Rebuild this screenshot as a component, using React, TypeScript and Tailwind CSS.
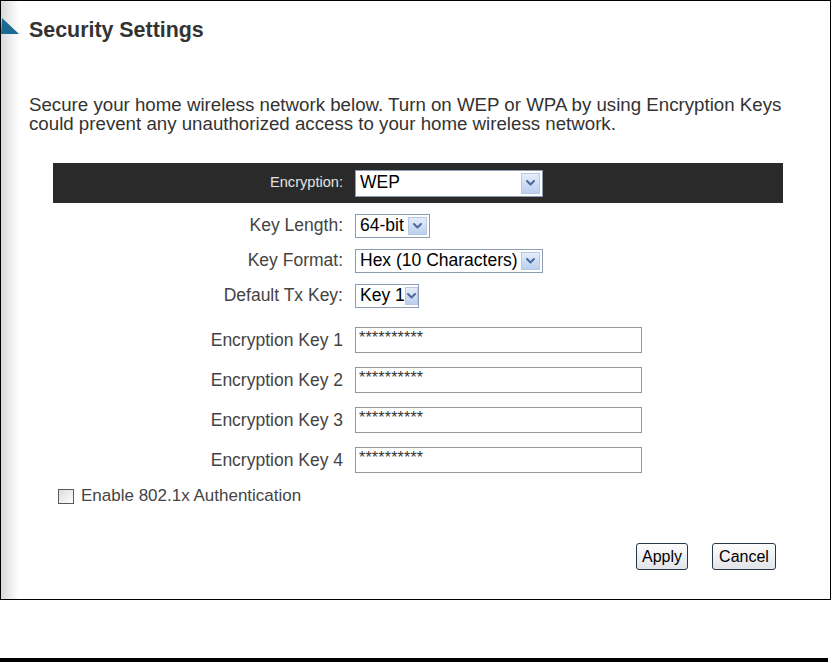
import React from "react";

const font = { fontFamily: '"Liberation Sans", Arial, sans-serif' };

function Arrow() {
  return (
    <div className="w-[19px] self-stretch my-[2px] mr-[2px] flex items-center justify-center border border-[#b7c8e6] bg-linear-to-b from-[#e4edfb] to-[#bccfee]">
      <svg width="11" height="8" viewBox="0 0 11 8" fill="none" stroke="#4c6a9e" strokeWidth="2" strokeLinecap="round" strokeLinejoin="round">
        <path d="M2 2l3.5 3.5L9 2" />
      </svg>
    </div>
  );
}

function Select({ value, w, h = "h-[24px]" }: { value: string; w: string; h?: string }) {
  return (
    <div className={`${w} ${h} flex items-center bg-white border border-[#8d9cb2]`}>
      <span className="flex-1 pl-[4px] text-[17.5px] leading-none text-black whitespace-nowrap">{value}</span>
      <Arrow />
    </div>
  );
}

const selects = [
  { label: "Key Length:", value: "64-bit", w: "w-[75px]" },
  { label: "Key Format:", value: "Hex (10 Characters)", w: "w-[188px]" },
  { label: "Default Tx Key:", value: "Key 1", w: "w-[64px]" },
];

const keys = ["Encryption Key 1", "Encryption Key 2", "Encryption Key 3", "Encryption Key 4"];

export default function App() {
  return (
    <div className="w-[832px] h-[662px] bg-white flex flex-col" style={font}>
      <div className="w-[831px] h-[600px] border border-black flex">
        {/* left shade strip */}
        <div className="w-[18px] shrink-0 bg-linear-to-r from-[#d9d9d9] to-white">
          <svg width="18" height="17" viewBox="0 0 18 17" className="mt-[17px]">
            <polygon points="1,0 18,16 0,16" fill="#1b6a94" />
          </svg>
        </div>

        <div className="flex-1 flex flex-col pl-[10px]">
          <h1 className="mt-[16px] text-[21.4px] leading-[26px] font-bold text-[#333]">Security Settings</h1>

          <p className="mt-[52px] text-[18.7px] leading-[19px] text-[#333]">
            Secure your home wireless network below. Turn on WEP or WPA by using Encryption Keys
            <br />
            could prevent any unauthorized access to your home wireless network.
          </p>

          <div className="ml-[24px] mt-[30px] w-[730px] flex flex-col">
            <div className="h-[40px] bg-[#2a2a2a] flex items-center">
              <span className="w-[290px] text-right text-[14.6px] text-[#e4e4e4]">Encryption:</span>
              <div className="ml-[12px]">
                <Select value="WEP" w="w-[188px]" h="h-[27px]" />
              </div>
            </div>

            <div className="pt-[5px] flex flex-col">
              {selects.map((s) => (
                <div key={s.label} className="h-[35px] flex items-center">
                  <span className="w-[290px] text-right text-[17.5px] text-[#444]">{s.label}</span>
                  <div className="ml-[12px]">
                    <Select value={s.value} w={s.w} />
                  </div>
                </div>
              ))}
            </div>

            <div className="mt-[7px] flex flex-col">
              {keys.map((k) => (
                <div key={k} className="h-[40px] flex items-center">
                  <span className="w-[290px] text-right text-[17.5px] text-[#444]">{k}</span>
                  <div className="ml-[12px] w-[287px] h-[26px] border border-[#9a9a9a] bg-white pl-[3px] text-[16px] leading-[20px] text-[#333] tracking-[0.2px]">
                    **********
                  </div>
                </div>
              ))}
            </div>
          </div>

          <label className="ml-[29px] mt-[1px] flex items-center gap-[7px] h-[30px]">
            <span className="w-[16px] h-[15px] border border-[#5a5a5a] bg-linear-to-br from-[#dcdcdc] to-white" />
            <span className="text-[17px] text-[#444]">Enable 802.1x Authentication</span>
          </label>

          <div className="mt-[32px] flex justify-end gap-[24px] pr-[54px]">
            <button className="w-[52px] h-[27px] rounded-[3px] border border-[#27384a] bg-linear-to-b from-[#fdfdfd] to-[#e2e4e8] text-[16px] text-black">
              Apply
            </button>
            <button className="w-[64px] h-[27px] rounded-[3px] border border-[#27384a] bg-linear-to-b from-[#fdfdfd] to-[#e2e4e8] text-[16px] text-black">
              Cancel
            </button>
          </div>
        </div>
      </div>

      <div className="mt-[58px] w-[828px] h-[4px] bg-black" />
    </div>
  );
}
